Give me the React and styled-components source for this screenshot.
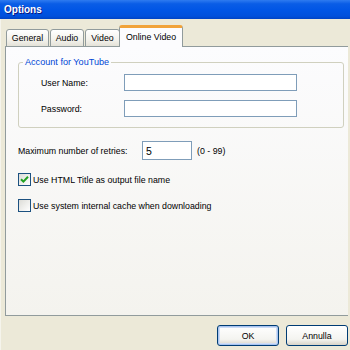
import React from 'react'
import styled, { createGlobalStyle } from 'styled-components'

const Global = createGlobalStyle`
  html, body {
    margin: 0;
    padding: 0;
    overflow: hidden;
    background: #ECE9D8;
  }
  body {
    font-family: "Liberation Sans", Arial, sans-serif;
    font-size: 8.8px;
    color: #000;
  }
`

const App = () => {
  return (
    <>
      <Global />
      <Dialog>
        <TitleBar>Options</TitleBar>

        <Body>
          <TabStrip>
            <Tab $w={43}>General</Tab>
            <Tab $w={34}>Audio</Tab>
            <Tab $w={35}>Video</Tab>
            <Tab $w={64} $active>Online Video</Tab>
          </TabStrip>

          <Panel>
            <GroupBox>
              <Legend>Account for YouTube</Legend>
              <FieldRow>
                <FieldLabel>User Name:</FieldLabel>
                <TextBox />
              </FieldRow>
              <FieldRow>
                <FieldLabel>Password:</FieldLabel>
                <TextBox />
              </FieldRow>
            </GroupBox>

            <RetriesRow>
              <RetriesLabel>Maximum number of retries:</RetriesLabel>
              <NumberBox>5</NumberBox>
              <Hint>(0 - 99)</Hint>
            </RetriesRow>

            <CheckRow $top={13}>
              <CheckBox>
                <svg width="9" height="9" viewBox="0 0 9 9">
                  <path d="M1 4.2 L3.4 6.6 L8 1.8" fill="none" stroke="#21A121" strokeWidth="2" />
                </svg>
              </CheckBox>
              <CheckLabel>Use HTML Title as output file name</CheckLabel>
            </CheckRow>
            <CheckRow $top={13}>
              <CheckBox />
              <CheckLabel>Use system internal cache when downloading</CheckLabel>
            </CheckRow>
          </Panel>

          <ButtonRow>
            <Button $default>OK</Button>
            <Button>Annulla</Button>
          </ButtonRow>
        </Body>
      </Dialog>
    </>
  )
}

const Dialog = styled.div`
  width: 362px;
  height: 350px;
  display: flex;
  flex-direction: column;
  background: #ECE9D8;
  border-left: 1px solid #F5F4EC;
`

const TitleBar = styled.div`
  height: 19px;
  display: flex;
  align-items: center;
  padding-left: 4px;
  color: #FFFFFF;
  font-size: 10px;
  font-weight: bold;
  text-shadow: 1px 1px 0 #0A1883;
  background: linear-gradient(#2E7BF0 0%, #0A5DE6 20%, #0055E5 55%, #0050DC 85%, #0043C4 100%);
  margin-left: -1px;
`

const Body = styled.div`
  display: flex;
  flex-direction: column;
  padding: 6px 15px 0 4px;
`

const TabStrip = styled.div`
  display: flex;
  align-items: flex-end;
  height: 22px;
  padding-left: 1px;
  gap: 1px;
  position: relative;
  z-index: 1;
  margin-bottom: -1px;
`

const Tab = styled.div`
  width: ${p => p.$w}px;
  height: ${p => (p.$active ? 22 : 18)}px;
  box-sizing: border-box;
  display: flex;
  align-items: center;
  justify-content: center;
  border: 1px solid #919B9C;
  border-bottom: ${p => (p.$active ? 'none' : '1px solid #919B9C')};
  border-top: ${p => (p.$active ? '3px solid #F1A33A' : '1px solid #919B9C')};
  border-radius: 3px 3px 0 0;
  margin-left: ${p => (p.$active ? '-2px' : '0')};
  padding-bottom: ${p => (p.$active ? '2px' : '0')};
  background: ${p => (p.$active ? '#FCFCFE' : 'linear-gradient(#FFFFFF, #F3F2EC 60%, #E4E2D8)')};
  white-space: nowrap;
`

const Panel = styled.div`
  height: 270px;
  box-sizing: border-box;
  border: 1px solid #919B9C;
  border-right: none;
  background: linear-gradient(#FCFCFE, #F4F3EE);
  padding: 10px 0 0 12px;
  display: flex;
  flex-direction: column;
`

const GroupBox = styled.fieldset`
  margin: 0 4px 0 0;
  padding: 6px 0 10px 4px;
  border: 1px solid #D0D0BF;
  border-radius: 3px;
  display: flex;
  flex-direction: column;
  gap: 9px;
  min-width: 0;
`

const Legend = styled.legend`
  color: #0046D5;
  font-size: 9.1px;
  padding: 0 2px;
  line-height: 11px;
`

const FieldRow = styled.div`
  display: grid;
  grid-template-columns: 83px 173px;
  align-items: center;
  padding-left: 18px;
`

const FieldLabel = styled.span`
  white-space: nowrap;
`

const TextBox = styled.div`
  height: 17px;
  box-sizing: border-box;
  border: 1px solid #7F9DB9;
  background: #FFFFFF;
`

const RetriesRow = styled.div`
  display: flex;
  align-items: center;
  margin-top: 13px;
`

const RetriesLabel = styled.span`
  width: 124px;
  white-space: nowrap;
`

const NumberBox = styled.div`
  width: 50px;
  height: 19px;
  box-sizing: border-box;
  border: 1px solid #7F9DB9;
  background: #FFFFFF;
  display: flex;
  align-items: center;
  padding-left: 3px;
  font-size: 10.5px;
`

const Hint = styled.span`
  margin-left: 5px;
`

const CheckRow = styled.div`
  display: flex;
  align-items: center;
  gap: 2px;
  margin-top: ${p => p.$top}px;
`

const CheckBox = styled.span`
  width: 13px;
  height: 13px;
  box-sizing: border-box;
  border: 1px solid #1C5180;
  background: linear-gradient(135deg, #DCDCD7, #FFFFFF);
  display: flex;
  align-items: center;
  justify-content: center;
`

const CheckLabel = styled.span`
  white-space: nowrap;
`

const ButtonRow = styled.div`
  display: flex;
  justify-content: flex-end;
  gap: 7px;
  margin-top: 9px;
`

const Button = styled.div`
  width: 62px;
  height: 21px;
  box-sizing: border-box;
  border: 1px solid #003C74;
  border-radius: 3px;
  background: linear-gradient(#FFFFFF, #F4F4F0 70%, #D8D3C8);
  box-shadow: ${p => (p.$default ? 'inset 0 0 0 1px #A8C4F0, inset 0 0 0 2px #CEDCF5' : 'none')};
  display: flex;
  align-items: center;
  justify-content: center;
`

export default App
